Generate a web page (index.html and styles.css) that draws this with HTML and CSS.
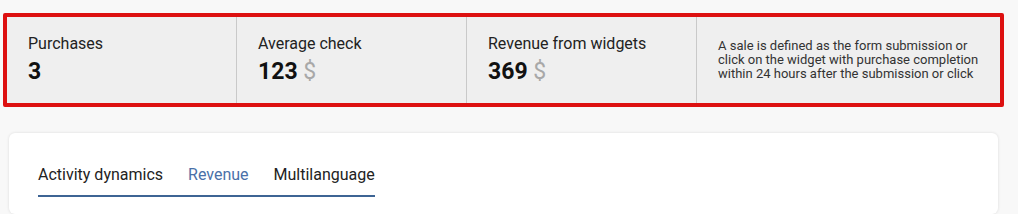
FILE: index.html
```html
<!DOCTYPE html>
<html lang="en">
<head>
    <meta charset="UTF-8">
    <title>Widget statistics</title>
    <link rel="stylesheet" href="styles.css">
</head>
<body>
    <div class="stats">
        <div class="stat">
            <div class="stat-label">Purchases</div>
            <div class="stat-value">3</div>
        </div>
        <div class="stat">
            <div class="stat-label">Average check</div>
            <div class="stat-value">123 <span class="currency">$</span></div>
        </div>
        <div class="stat">
            <div class="stat-label">Revenue from widgets</div>
            <div class="stat-value">369 <span class="currency">$</span></div>
        </div>
        <div class="stat stat-note">
            A sale is defined as the form submission or<br>
            click on the widget with purchase completion<br>
            within 24 hours after the submission or click
        </div>
    </div>

    <div class="card">
        <div class="tabs">
            <div class="tab">Activity dynamics</div>
            <div class="tab active">Revenue</div>
            <div class="tab">Multilanguage</div>
        </div>
    </div>
</body>
</html>
```

FILE: styles.css
```css
html, body {
    height: 214px;
    overflow: hidden;
}

body {
    margin: 0;
    background-color: #f8f8f8;
    font-family: Roboto, "Liberation Sans", sans-serif;
    color: #222;
}

.stats {
    display: flex;
    margin: 13px 14px 0 3px;
    border: 4px solid #dd1010;
    border-radius: 2px;
    background-color: #efefef;
    height: 86px;
}

.stat {
    width: 230px;
    padding: 17px 0 0 21px;
    box-sizing: border-box;
    border-right: 1px solid #c9c9c9;
}

.stat-label {
    font-size: 16px;
    line-height: 19px;
    color: #222;
}

.stat-value {
    margin-top: 5px;
    font-size: 23px;
    font-weight: bold;
    line-height: 27px;
    color: #111;
}

.currency {
    font-weight: normal;
    color: #a8a8a8;
}

.stat-note {
    flex: 1;
    border-right: none;
    padding-top: 22px;
    font-size: 13px;
    line-height: 14px;
    color: #333;
}

.card {
    margin: 26px 20px 0 9px;
    background-color: white;
    border-radius: 6px;
    box-shadow: 0 0 3px rgba(0, 0, 0, 0.12);
    height: 81px;
    box-sizing: border-box;
    padding: 32px 29px 0;
}

.tabs {
    display: inline-flex;
    gap: 25px;
    border-bottom: 2px solid #3d6494;
}

.tab {
    font-size: 16px;
    line-height: 19px;
    padding-bottom: 11px;
    color: #222;
}

.tab.active {
    color: #4a70a8;
    box-shadow: inset 0 -2px 0 #3d6494;
    margin-bottom: -2px;
    padding-bottom: 13px;
}
```
